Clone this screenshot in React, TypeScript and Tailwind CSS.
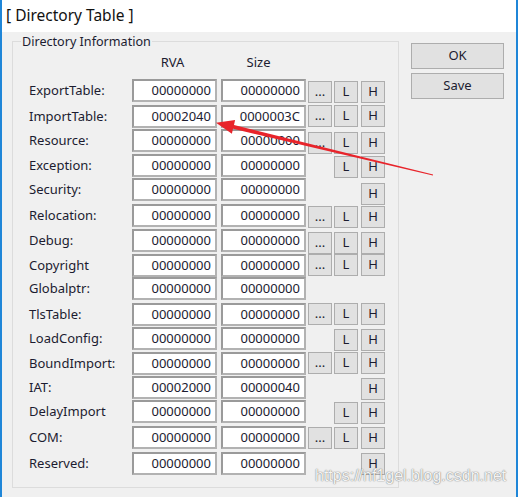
const rows = [
  { name: 'ExportTable:', rva: '00000000', size: '00000000', dots: true, l: true, h: true, mt: 'mt-[9px]', bt: 'mt-[2px]' },
  { name: 'ImportTable:', rva: '00002040', size: '0000003C', dots: true, l: true, h: true, mt: 'mt-[3px]', bt: 'mt-0' },
  { name: 'Resource:', rva: '00000000', size: '00000000', dots: true, l: true, h: true, mt: 'mt-[1px]', bt: 'mt-[3px]' },
  { name: 'Exception:', rva: '00000000', size: '00000000', dots: false, l: true, h: true, mt: 'mt-[2px]', bt: 'mt-[2px]' },
  { name: 'Security:', rva: '00000000', size: '00000000', dots: false, l: false, h: true, mt: 'mt-[1px]', bt: 'mt-[5px]' },
  { name: 'Relocation:', rva: '00000000', size: '00000000', dots: true, l: true, h: true, mt: 'mt-[3px]', bt: 'mt-[2px]' },
  { name: 'Debug:', rva: '00000000', size: '00000000', dots: true, l: true, h: true, mt: 'mt-[2px]', bt: 'mt-[3px]' },
  { name: 'Copyright', rva: '00000000', size: '00000000', dots: true, l: true, h: true, mt: 'mt-[2px]', bt: 'mt-0' },
  { name: 'Globalptr:', rva: '00000000', size: '00000000', dots: false, l: false, h: false, mt: 'mt-0', bt: 'mt-0' },
  { name: 'TlsTable:', rva: '00000000', size: '00000000', dots: true, l: true, h: true, mt: 'mt-[3px]', bt: 'mt-0' },
  { name: 'LoadConfig:', rva: '00000000', size: '00000000', dots: false, l: true, h: true, mt: 'mt-[1px]', bt: 'mt-[2px]' },
  { name: 'BoundImport:', rva: '00000000', size: '00000000', dots: true, l: true, h: true, mt: 'mt-[2px]', bt: 'mt-0' },
  { name: 'IAT:', rva: '00002000', size: '00000040', dots: false, l: false, h: true, mt: 'mt-[1px]', bt: 'mt-[2px]' },
  { name: 'DelayImport', rva: '00000000', size: '00000000', dots: false, l: true, h: true, mt: 'mt-[1px]', bt: 'mt-[2px]' },
  { name: 'COM:', rva: '00000000', size: '00000000', dots: true, l: true, h: true, mt: 'mt-[3px]', bt: 'mt-[1px]' },
  { name: 'Reserved:', rva: '00000000', size: '00000000', dots: false, l: false, h: true, mt: 'mt-[3px]', bt: 'mt-[1px]' },
]

const font = "font-['Noto_Sans',sans-serif]"

function Field({ value }: { value: string }) {
  return (
    <div className="w-[85px] h-[23px] bg-white border-2 border-t-[#9a9a9a] border-l-[#9a9a9a] border-b-[#b2b2b2] border-r-[#b2b2b2] flex items-center justify-end pr-[4px] text-[13px] text-[#1c1c30]">
      {value}
    </div>
  )
}

function SmallBtn({ label, show, cls }: { label: string; show: boolean; cls: string }) {
  if (!show) return <div className={`w-[24px] shrink-0 ${cls}`} />
  return (
    <div className={`w-[24px] h-[22px] shrink-0 bg-[#e1e1e1] border border-[#adadad] flex items-center justify-center text-[13px] text-[#1c1c30] ${cls}`}>
      {label}
    </div>
  )
}

export default function App() {
  return (
    <div className={`relative w-[518px] h-[497px] overflow-hidden flex flex-col border-x-2 border-[#1f86d8] ${font}`}>
      {/* title */}
      <div className="h-[32px] bg-white flex items-center pl-[4px] text-[15.5px] text-[#111]">
        [ Directory Table ]
      </div>

      {/* body */}
      <div className="flex-1 bg-[#f0f0f0] flex items-start pl-[10px] pt-[2px]">
        <fieldset className="w-[387px] h-[454px] border border-[#dcdcdc]">
          <legend className="ml-[8px] px-[1px] text-[12.6px] leading-[15px] text-[#1c1c30]">Directory Information</legend>

          <div className="flex mt-[5px] h-[16px] items-center text-[13px] leading-[16px] text-[#1c1c30]">
            <div className="w-[119px]" />
            <div className="w-[85px] text-center pr-[4px]">RVA</div>
            <div className="w-[85px] ml-[4px] text-center pr-[10px]">Size</div>
          </div>

          {rows.map((r) => (
            <div key={r.name} className={`flex items-start h-[23px] pl-[16px] ${r.mt}`}>
              <div className="w-[103px] h-[23px] flex items-center text-[13px] text-[#1c1c30]">{r.name}</div>
              <Field value={r.rva} />
              <div className="ml-[4px]">
                <Field value={r.size} />
              </div>
              <div className={`flex ${r.bt}`}>
                <SmallBtn label="..." show={r.dots} cls="ml-[2px]" />
                <SmallBtn label="L" show={r.l} cls="ml-[2px]" />
                <SmallBtn label="H" show={r.h} cls="ml-[3px]" />
              </div>
            </div>
          ))}
        </fieldset>

        <div className="ml-[12px] mt-[9px] flex flex-col gap-[4px]">
          <button className="w-[93px] h-[26px] bg-[#e1e1e1] border border-[#adadad] text-[13px] text-[#1c1c30]">OK</button>
          <button className="w-[93px] h-[26px] bg-[#e1e1e1] border border-[#adadad] text-[13px] text-[#1c1c30]">Save</button>
        </div>
      </div>

      {/* red annotation arrow */}
      <svg className="absolute left-[-2px] top-0 pointer-events-none" width="518" height="497" viewBox="0 0 518 497">
        <polygon
          fill="#e8242b"
          points="216,122.7 235.1,120.1 234,125 433.1,174.5 432.9,175.5 233,128.8 231.9,133.7"
        />
      </svg>

      {/* watermark */}
      <div className="absolute left-[313px] top-[466px] text-[16px] leading-[20px] font-['Liberation_Sans',sans-serif] text-[#f4f4f4] [text-shadow:0_0_1px_rgba(0,0,0,0.55),0_0_2px_rgba(0,0,0,0.2)]">
        https://nf1gel.blog.csdn.net
      </div>
    </div>
  )
}
